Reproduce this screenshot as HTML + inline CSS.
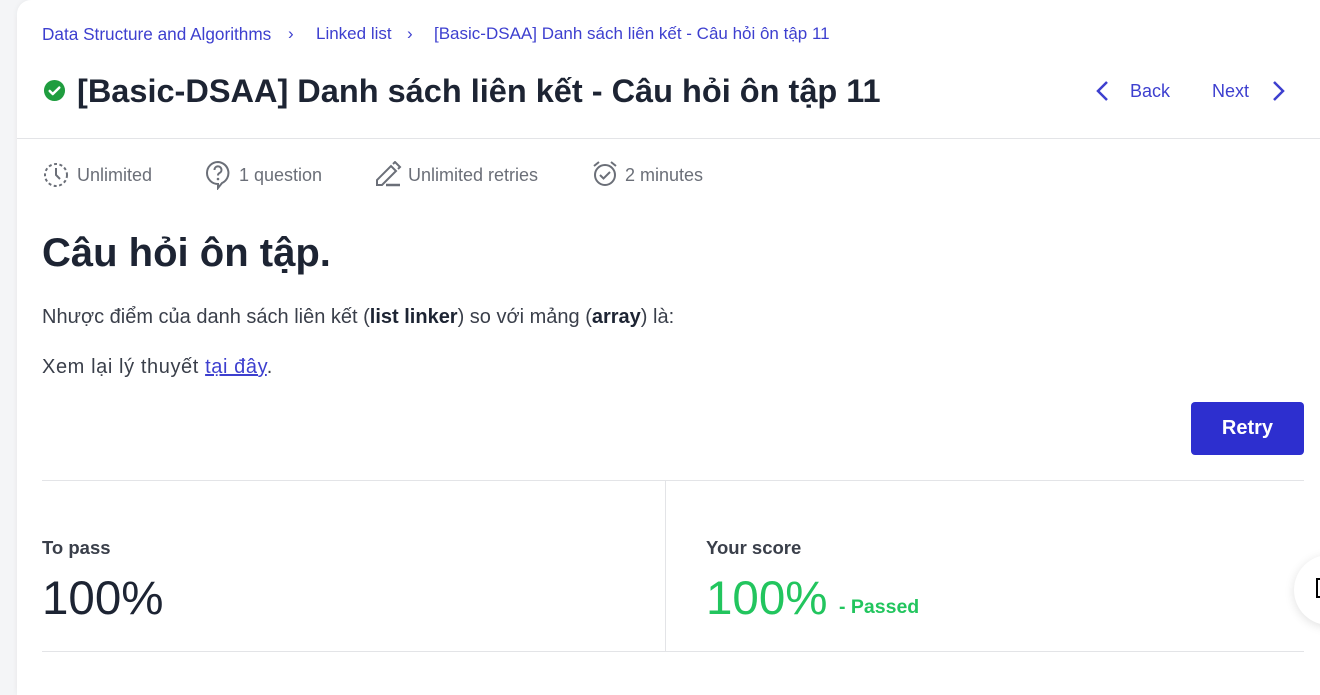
<!DOCTYPE html>
<html><head><meta charset="utf-8"><style>
*{margin:0;padding:0;box-sizing:border-box}
body{width:1320px;height:695px;background:#f4f5f7;font-family:"Liberation Sans",sans-serif;color:#1d2433;overflow:hidden;position:relative}
.card{position:absolute;left:17px;top:0;width:1320px;height:695px;background:#fff;border-radius:14px 0 0 0;box-shadow:0 0 6px rgba(0,0,0,.06)}
.a{position:absolute;white-space:nowrap}
.bc{color:#3d3fcf;font-size:17px;top:24px}
.meta{color:#6b6f78;font-size:18px;top:165px}
.line{position:absolute;background:#e3e4e7}
</style></head><body>
<div class="card"></div>
<div class="a bc" style="left:42px;font-size:17.2px">Data Structure and Algorithms</div>
<div class="a bc" style="left:288px">›</div>
<div class="a bc" style="left:316px">Linked list</div>
<div class="a bc" style="left:407px">›</div>
<div class="a bc" style="left:434px">[Basic-DSAA] Danh sách liên kết - Câu hỏi ôn tập 11</div>

<svg class="a" style="left:43px;top:79px" width="23" height="23" viewBox="0 0 24 24"><circle cx="12" cy="12" r="11" fill="#1f9d3f"/><path d="M7 12.5l3.2 3.2L17 9" stroke="#fff" stroke-width="2.6" fill="none" stroke-linecap="round" stroke-linejoin="round"/></svg>
<div class="a" style="left:77px;top:73px;font-size:32.5px;font-weight:bold">[Basic-DSAA] Danh sách liên kết - Câu hỏi ôn tập 11</div>

<svg class="a" style="left:1094px;top:80px" width="18" height="22" viewBox="0 0 18 22"><path d="M13 2L4 11l9 9" stroke="#3d3fcf" stroke-width="2.5" fill="none"/></svg>
<div class="a" style="left:1130px;top:81px;font-size:18px;color:#3d3fcf">Back</div>
<div class="a" style="left:1212px;top:81px;font-size:18px;color:#3d3fcf">Next</div>
<svg class="a" style="left:1270px;top:80px" width="18" height="22" viewBox="0 0 18 22"><path d="M4 2l9 9-9 9" stroke="#3d3fcf" stroke-width="2.5" fill="none"/></svg>
<div class="line" style="left:17px;top:138px;width:1303px;height:1px"></div>

<svg class="a" style="left:43px;top:162px" width="26" height="26" viewBox="0 0 26 26"><circle cx="13" cy="13" r="11" fill="none" stroke="#6b6f78" stroke-width="2" stroke-dasharray="3 2.5"/><path d="M13 6v7l4 4" stroke="#6b6f78" stroke-width="2" fill="none"/></svg>
<div class="a meta" style="left:77px">Unlimited</div>
<svg class="a" style="left:205px;top:160px" width="26" height="30" viewBox="0 0 26 30"><path d="M13 2a11 11 0 1 0 0 22h0l0 4 4-5A11 11 0 0 0 13 2z" fill="none" stroke="#6b6f78" stroke-width="2"/><path d="M9.5 10a3.5 3.5 0 1 1 5 3c-1.2.6-1.5 1.3-1.5 2.5" stroke="#6b6f78" stroke-width="2" fill="none"/><circle cx="13" cy="19" r="1.3" fill="#6b6f78"/></svg>
<div class="a meta" style="left:239px">1 question</div>
<svg class="a" style="left:374px;top:161px" width="28" height="26" viewBox="0 0 28 26"><path d="M3 24v-5L17 5l5 5L8 24z" fill="none" stroke="#6b6f78" stroke-width="2"/><path d="M19 3l2-2 5 5-2 2" stroke="#6b6f78" stroke-width="2" fill="none"/><path d="M12 24h14" stroke="#6b6f78" stroke-width="2.5"/></svg>
<div class="a meta" style="left:408px">Unlimited retries</div>
<svg class="a" style="left:592px;top:160px" width="26" height="28" viewBox="0 0 26 28"><circle cx="13" cy="15" r="10" fill="none" stroke="#6b6f78" stroke-width="2"/><path d="M8 15l3.5 3.5L18 12" stroke="#6b6f78" stroke-width="2" fill="none"/><path d="M2 6l5-4M24 6l-5-4" stroke="#6b6f78" stroke-width="2"/></svg>
<div class="a meta" style="left:625px">2 minutes</div>

<div class="a" style="left:42px;top:231px;font-size:40px;font-weight:bold">Câu hỏi ôn tập.</div>
<div class="a" style="left:42px;top:306px;font-size:20px;color:#3a3f4a">Nhược điểm của danh sách liên kết (<b style="color:#1d2433">list linker</b>) so với mảng (<b style="color:#1d2433">array</b>) là:</div>
<div class="a" style="left:42px;top:356px;font-size:20px;color:#3a3f4a;letter-spacing:0.6px">Xem lại lý thuyết <span style="color:#3d3fcf;text-decoration:underline">tại đây</span>.</div>

<div class="a" style="left:1191px;top:402px;width:113px;height:53px;background:#2d2fcf;border-radius:4px;color:#fff;font-size:20px;font-weight:bold;text-align:center;line-height:53px">Retry</div>

<div class="line" style="left:42px;top:480px;width:1262px;height:1px"></div>
<div class="line" style="left:665px;top:481px;width:1px;height:170px"></div>
<div class="line" style="left:42px;top:651px;width:1262px;height:1px"></div>

<div class="a" style="left:42px;top:537px;font-size:18.5px;font-weight:bold;color:#3a3f4a">To pass</div>
<div class="a" style="left:42px;top:571px;font-size:47.5px;color:#1d2433">100%</div>
<div class="a" style="left:706px;top:537px;font-size:18.5px;font-weight:bold;color:#3a3f4a">Your score</div>
<div class="a" style="left:706px;top:571px;font-size:47.5px;color:#22c55e">100%</div>
<div class="a" style="left:839px;top:596px;font-size:19.5px;font-weight:bold;color:#22c55e">- Passed</div>

<div class="a" style="left:1294px;top:555px;width:70px;height:70px;border-radius:50%;background:#fff;box-shadow:0 2px 10px rgba(0,0,0,.12)"></div>
<div class="a" style="left:1316px;top:578px;width:6px;height:20px;border:2px solid #000;border-right:none"></div>
</body></html>
